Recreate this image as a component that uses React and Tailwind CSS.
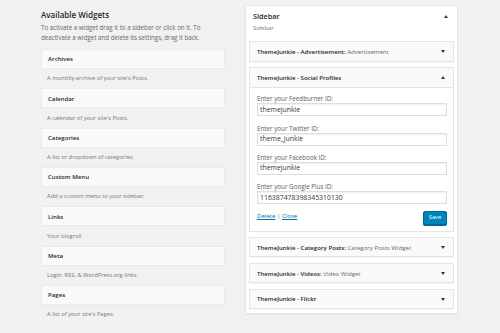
const available = [
  { title: 'Archives', desc: "A monthly archive of your site's Posts." },
  { title: 'Calendar', desc: "A calendar of your site's Posts." },
  { title: 'Categories', desc: 'A list or dropdown of categories.' },
  { title: 'Custom Menu', desc: 'Add a custom menu to your sidebar.' },
  { title: 'Links', desc: 'Your blogroll' },
  { title: 'Meta', desc: 'Login, RSS, & WordPress.org links.' },
  { title: 'Pages', desc: "A list of your site's Pages." },
]

const fields = [
  { label: 'Enter your Feedburner ID:', value: 'themejunkie' },
  { label: 'Enter your Twitter ID:', value: 'theme_junkie' },
  { label: 'Enter your Facebook ID:', value: 'themejunkie' },
  { label: 'Enter your Google Plus ID:', value: '116387478398345310130' },
]

function Caret({ up }) {
  return (
    <svg width="4" height="3" viewBox="0 0 4 3" className="shrink-0">
      <path d={up ? 'M0 3 L2 0 L4 3 Z' : 'M0 0 L4 0 L2 3 Z'} fill="#32373c" />
    </svg>
  )
}

function WidgetBar({ name, sub }) {
  return (
    <div className="flex h-[20.5px] items-center justify-between border border-[#e5e5e5] bg-[#fafafa] pl-[7px] pr-[8px] shadow-[0_1px_1px_rgba(0,0,0,0.04)]">
      <span className="whitespace-nowrap text-[6.1px] text-[#23282d]">
        <span className="font-semibold">{name}</span>
        {sub ? <span className="text-[#666]">{sub}</span> : null}
      </span>
      <Caret />
    </div>
  )
}

export default function App() {
  return (
    <div className="flex h-[333px] w-[500px] bg-[#f1f1f1] font-['Open_Sans',sans-serif]">
      {/* Available widgets */}
      <div className="ml-[41px] w-[184px] pt-[9px]">
        <h2 className="text-[8px] font-semibold leading-[12px] text-[#23282d]">Available Widgets</h2>
        <p className="mt-[2px] text-[6.2px] leading-[10px] text-[#666]">
          To activate a widget drag it to a sidebar or click on it. To deactivate a widget and delete its settings, drag it back.
        </p>
        <div className="mt-[6px]">
          {available.map((w) => (
            <div key={w.title}>
              <div className="flex h-[20px] items-center border border-[#ebebeb] bg-[#fafafa] px-[6px] text-[6.1px] font-semibold text-[#23282d]">
                {w.title}
              </div>
              <p className="flex h-[19.33px] items-center pl-[6px] text-[5.75px] text-[#777]">{w.desc}</p>
            </div>
          ))}
        </div>
      </div>

      {/* Sidebar */}
      <div className="ml-[20px] mt-[5px] h-[309px] w-[213px] border border-[#e5e5e5] bg-white px-[3px] shadow-[0_1px_1px_rgba(0,0,0,0.04)]">
        <div className="flex items-center justify-between pl-[4px] pr-[6px] pt-[4px]">
          <h3 className="text-[7.3px] font-semibold leading-[12px] text-[#23282d]">Sidebar</h3>
          <Caret up />
        </div>
        <p className="mt-[2px] pl-[4px] text-[5.8px] leading-[9px] text-[#777]">Sidebar</p>

        <div className="mt-[8px] flex flex-col gap-[5.4px]">
          <WidgetBar name="ThemeJunkie - Advertisement:" sub=" Advertisement" />
          <div className="border border-[#e5e5e5] bg-white">
            <div className="flex h-[20px] items-center justify-between border-b border-[#e5e5e5] bg-[#fafafa] pl-[7px] pr-[8px]">
              <span className="text-[6.1px] font-semibold text-[#23282d]">ThemeJunkie - Social Profiles</span>
              <Caret up />
            </div>
            <div className="pb-[6px] pl-[7px] pr-[6px] pt-[7.5px]">
              {fields.map((f) => (
                <div key={f.label} className="mb-[8.3px]">
                  <label className="block text-[6.25px] leading-[8px] text-[#5a5a5a]">{f.label}</label>
                  <div className="flex h-[13px] items-center border border-[#ddd] px-[2px] text-[6.9px] text-[#333] shadow-[inset_0_1px_2px_rgba(0,0,0,0.07)]">
                    {f.value}
                  </div>
                </div>
              ))}
              <div className="-mt-[2px] flex items-start justify-between">
                <div className="pt-[1px] text-[6.1px] leading-[8px] text-[#0073aa]">
                  <span className="underline">Delete</span>
                  <span className="text-[#666]"> | </span>
                  <span className="underline">Close</span>
                </div>
                <button className="flex h-[14px] w-[24px] items-center justify-center rounded-[2px] border border-[#006799] bg-[#0085ba] text-[5.8px] text-white shadow-[0_1px_0_#006799]">
                  Save
                </button>
              </div>
            </div>
          </div>
          <WidgetBar name="ThemeJunkie - Category Posts:" sub=" Category Posts Widget" />
          <WidgetBar name="ThemeJunkie - Videos:" sub=" Video Widget" />
          <WidgetBar name="ThemeJunkie - Flickr" />
        </div>
      </div>
    </div>
  )
}
